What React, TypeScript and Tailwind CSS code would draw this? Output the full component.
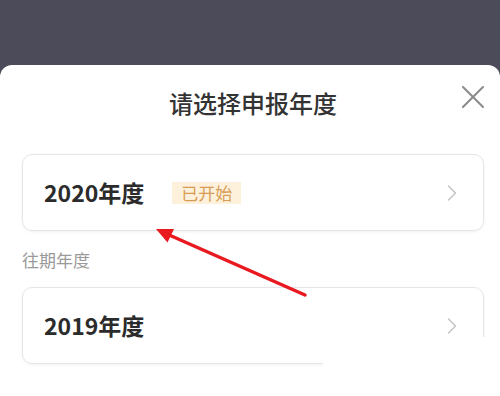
import React from "react";

const font = { fontFamily: '"Noto Sans CJK SC", "Noto Sans", sans-serif' };

function Chevron() {
  return (
    <svg width="12" height="18" viewBox="0 0 12 18" className="shrink-0">
      <path d="M2.5 2 L9.5 9 L2.5 16" fill="none" stroke="#c4c4c4" strokeWidth="1.5" strokeLinecap="round" strokeLinejoin="round" />
    </svg>
  );
}

export default function App() {
  return (
    <div className="relative w-[500px] h-[396px] bg-[#4b4b59] flex flex-col overflow-hidden" style={font}>
      <div className="h-[65px] shrink-0" />
      <div className="flex-1 bg-white rounded-t-[12px] flex flex-col">
        <div className="relative h-[76px] flex items-center justify-center">
          <span className="text-[24px] font-medium text-[#333333] leading-none pl-[6px]">请选择申报年度</span>
          <svg className="absolute right-[15px] top-[21px]" width="24" height="22" viewBox="0 0 24 22">
            <path d="M2 1 L22 21 M22 1 L2 21" stroke="#8a8a8a" strokeWidth="2" strokeLinecap="round" />
          </svg>
        </div>
        <div className="ml-[22px] mr-[16px] mt-[13px] h-[77px] rounded-[10px] border border-[#e6e6e6] shadow-[0_1px_3px_rgba(0,0,0,0.06)] flex items-center pl-[21px] pr-[25px]">
          <span className="text-[23px] font-bold text-[#2b2b2b] leading-none">2020年度</span>
          <span className="ml-[28px] bg-[#fdf1dc] text-[#d89c55] text-[17px] leading-[22px] px-[9px] h-[22px] flex items-center">已开始</span>
          <div className="flex-1" />
          <Chevron />
        </div>
        <div className="ml-[22px] mt-[17px] text-[17px] text-[#9a9a9a] leading-[24px]">往期年度</div>
        <div className="ml-[22px] mr-[16px] mt-[15px] h-[77px] rounded-[10px] border border-[#e6e6e6] shadow-[0_1px_3px_rgba(0,0,0,0.06)] flex items-center pl-[21px] pr-[25px]">
          <span className="text-[23px] font-bold text-[#2b2b2b] leading-none">2019年度</span>
          <div className="flex-1" />
          <Chevron />
        </div>
      </div>
      <div className="absolute left-[323px] top-[337px] right-0 bottom-0 bg-white" />
      <svg className="absolute left-0 top-0 pointer-events-none" width="500" height="396" viewBox="0 0 500 396">
        <line x1="305" y1="295" x2="168" y2="234.5" stroke="#e8191f" strokeWidth="3.5" strokeLinecap="round" />
        <polygon points="156,229 174,229 167.5,242.5" fill="#e8191f" />
      </svg>
    </div>
  );
}
